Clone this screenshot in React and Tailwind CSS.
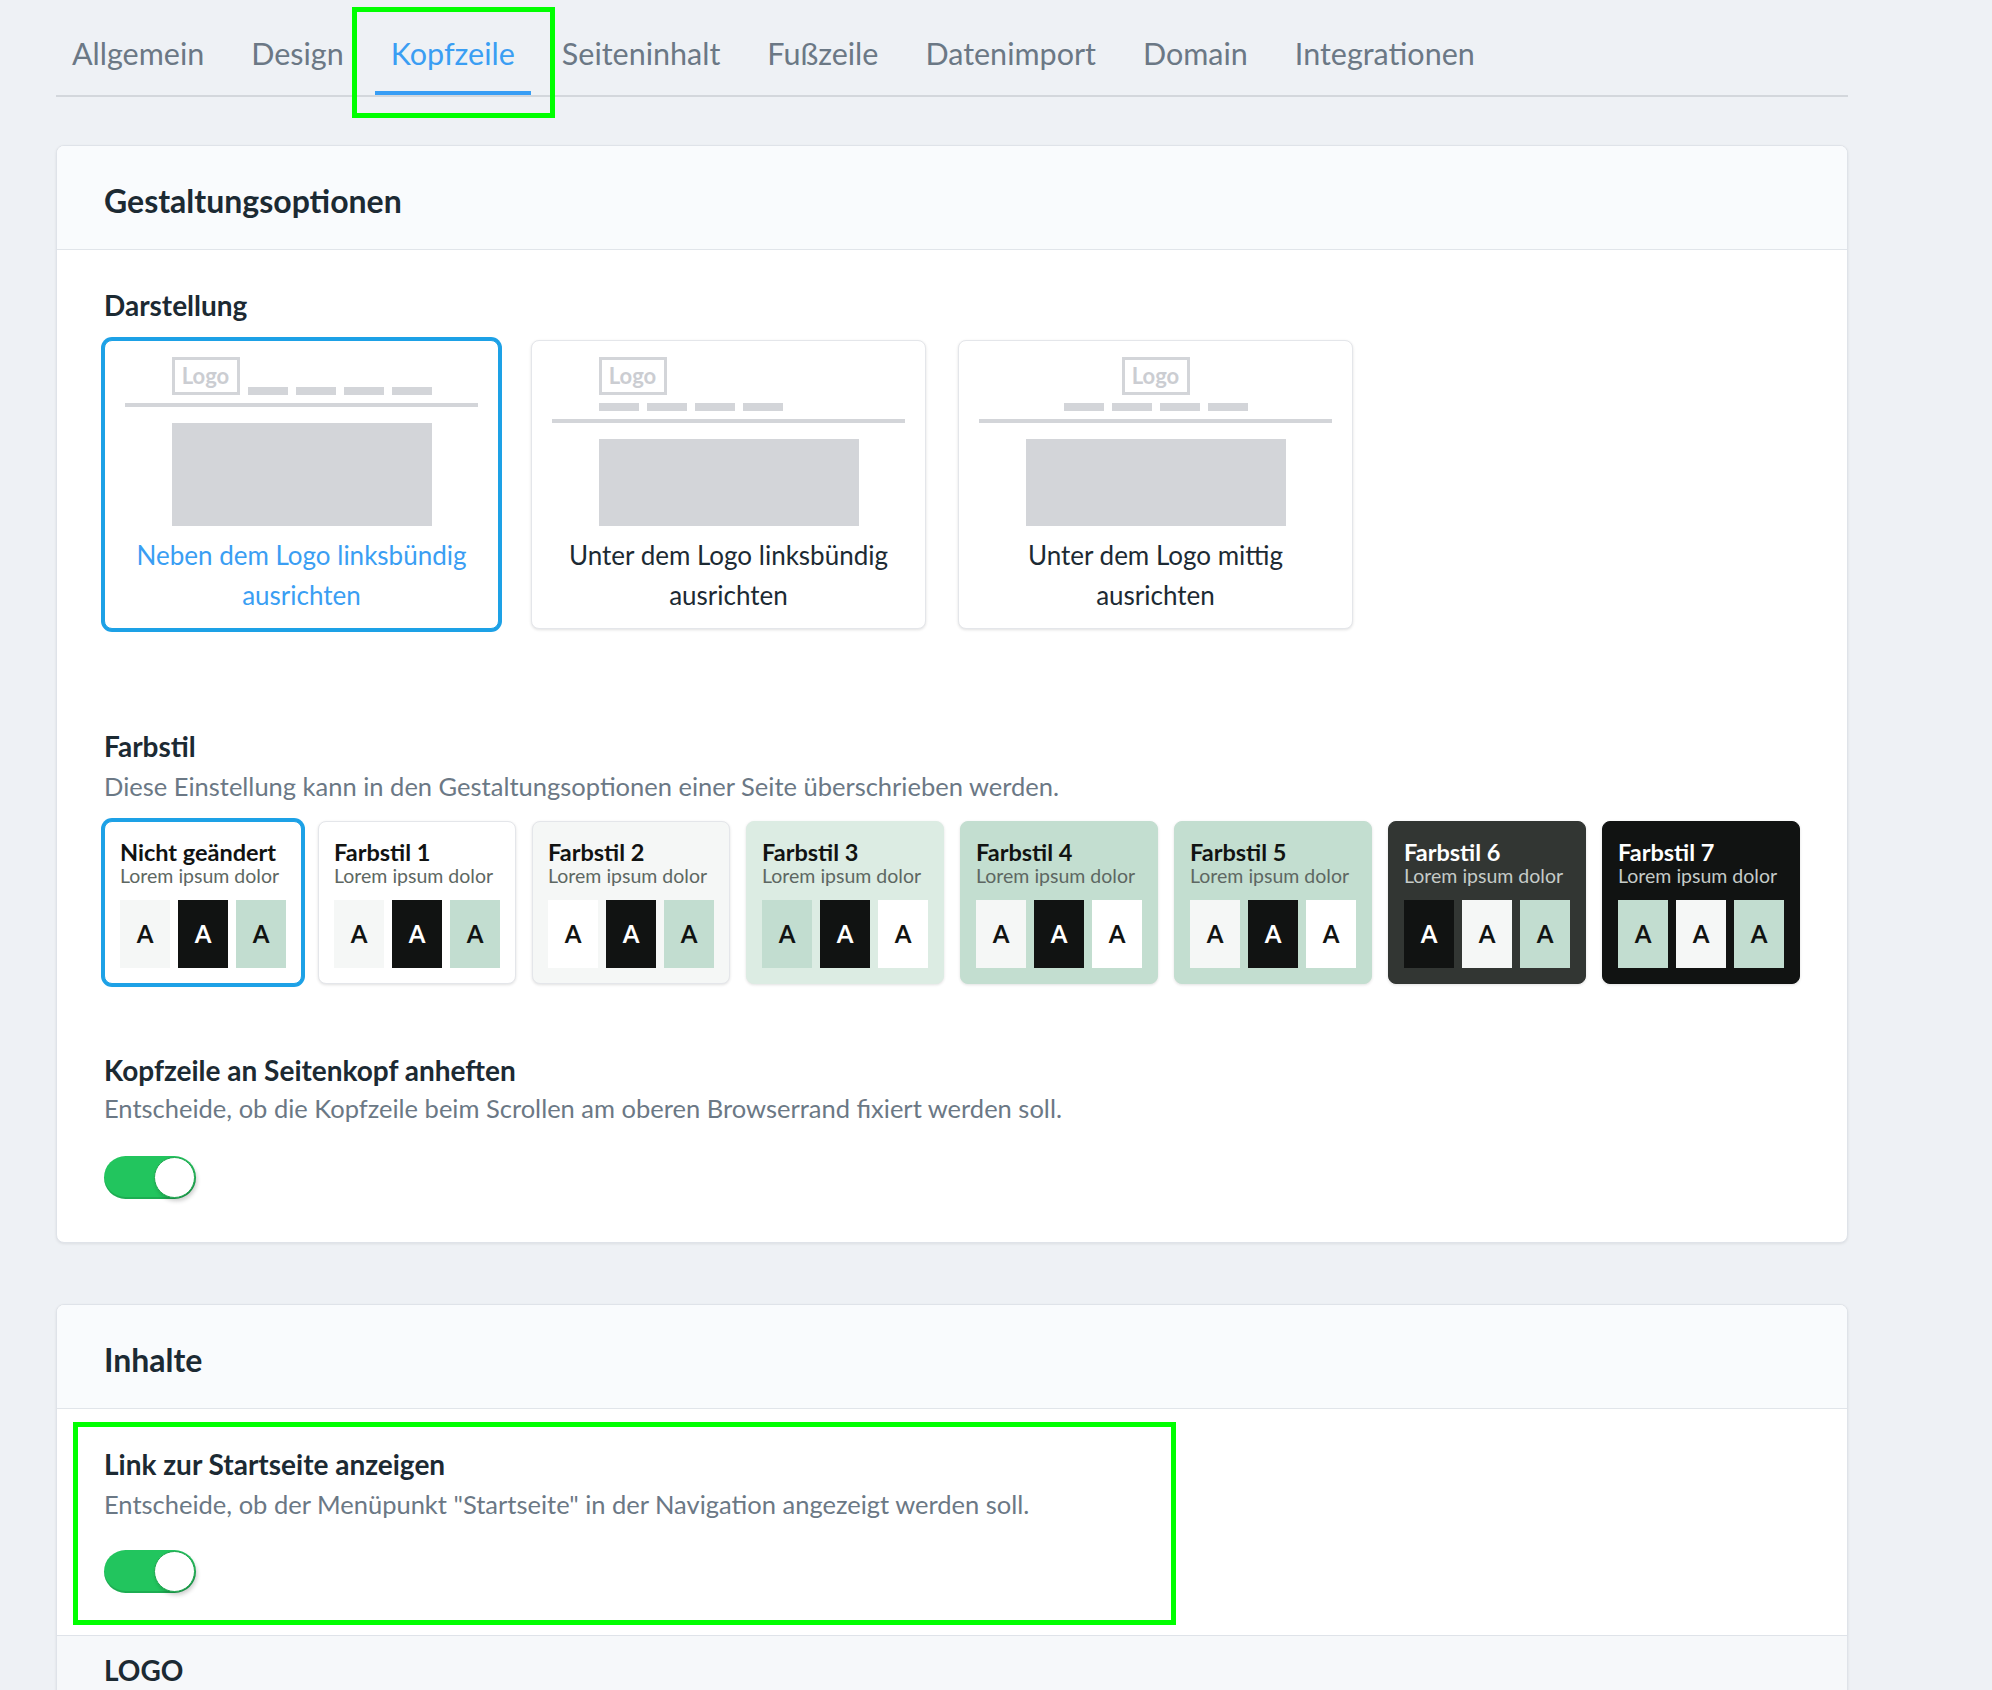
import React from 'react';

const tabs = ['Allgemein', 'Design', 'Kopfzeile', 'Seiteninhalt', 'Fußzeile', 'Datenimport', 'Domain', 'Integrationen'];

const SW = {
  light: 'bg-[#f5f7f6] text-[#111312]',
  white: 'bg-white text-[#111312]',
  dark: 'bg-[#111312] text-white',
  mint: 'bg-[#c2ddd0] text-[#111312]',
};

const styles = [
  { title: 'Nicht geändert', card: 'bg-white border-[#1da1e6] ring-[3px] ring-[#1da1e6]', dark: false, swatches: ['light', 'dark', 'mint'] },
  { title: 'Farbstil 1', card: 'bg-white border-[#e4e6ea]', dark: false, swatches: ['light', 'dark', 'mint'] },
  { title: 'Farbstil 2', card: 'bg-[#f5f7f6] border-[#e4e6ea]', dark: false, swatches: ['white', 'dark', 'mint'] },
  { title: 'Farbstil 3', card: 'bg-[#dcece3] border-[#dcece3]', dark: false, swatches: ['mint', 'dark', 'white'] },
  { title: 'Farbstil 4', card: 'bg-[#c3ded0] border-[#c3ded0]', dark: false, swatches: ['light', 'dark', 'white'] },
  { title: 'Farbstil 5', card: 'bg-[#c3ded0] border-[#c3ded0]', dark: false, swatches: ['light', 'dark', 'white'] },
  { title: 'Farbstil 6', card: 'bg-[#323633] border-[#323633]', dark: true, swatches: ['dark', 'light', 'mint'] },
  { title: 'Farbstil 7', card: 'bg-[#111312] border-[#111312]', dark: true, swatches: ['mint', 'light', 'mint'] },
];

const LogoBox = () => (
  <div className="flex h-[38px] w-[68px] items-center justify-center border-[3px] border-[#d3d5d9] text-[22px] font-bold leading-none text-[#cbcdd2]">
    Logo
  </div>
);

const Bars = () => (
  <div className="flex gap-2">
    <div className="h-2 w-10 bg-[#d3d5d9]" />
    <div className="h-2 w-10 bg-[#d3d5d9]" />
    <div className="h-2 w-10 bg-[#d3d5d9]" />
    <div className="h-2 w-10 bg-[#d3d5d9]" />
  </div>
);

const LayoutCard = ({ variant, selected, children }) => (
  <div
    className={
      selected
        ? 'flex h-[289px] w-[395px] flex-col rounded-lg border border-[#1da1e6] bg-white pt-4 ring-[3px] ring-[#1da1e6]'
        : 'flex h-[289px] w-[395px] flex-col rounded-lg border border-[#e4e6ea] bg-white pt-4 shadow-[0_1px_3px_rgba(0,0,0,0.12)]'
    }
  >
    {variant === 'side' && (
      <div className="flex w-[260px] items-end gap-2 self-center">
        <LogoBox />
        <Bars />
      </div>
    )}
    {variant === 'below' && (
      <div className="flex w-[260px] flex-col items-start gap-2 self-center">
        <LogoBox />
        <Bars />
      </div>
    )}
    {variant === 'center' && (
      <div className="flex w-[260px] flex-col items-center gap-2 self-center">
        <LogoBox />
        <Bars />
      </div>
    )}
    <div className="mx-5 mt-2 h-1 bg-[#d3d5d9]" />
    <div className="mt-4 w-[260px] flex-1 self-center bg-[#d3d5d9]" />
    <p
      className={
        selected
          ? 'mb-[13px] mt-[9px] text-center text-[26px] leading-10 text-[#3a9ef3]'
          : 'mb-[13px] mt-[9px] text-center text-[26px] leading-10 text-[#1c2a33]'
      }
    >
      {children}
    </p>
  </div>
);

const Toggle = () => (
  <div className="flex h-[43px] w-[92px] items-center justify-end rounded-full bg-[#22c55e] pr-[1px] shadow-[inset_0_-2px_0_rgba(0,0,0,0.12)]">
    <div className="h-[41px] w-[41px] rounded-full border border-[#1fa64f] bg-white shadow-[2px_3px_4px_rgba(0,0,0,0.2)]" />
  </div>
);

const CardHeader = ({ title }) => (
  <div className="border-b border-[#e1e5ea] bg-[#f9fbfd] px-[47px] pb-[28px] pt-[35px]">
    <h2 className="text-[32px] font-bold leading-10 text-[#1c2a33]">{title}</h2>
  </div>
);

export default function App() {
  return (
    <div className="relative min-h-screen bg-[#eef1f5] pb-10 font-['Lato',sans-serif]">
      <div className="ml-[56px] w-[1792px]">
        {/* Tabs */}
        <nav className="flex gap-[15px] border-b-2 border-[#d3d7dc]">
          {tabs.map((t) =>
            t === 'Kopfzeile' ? (
              <div key={t} className="border-b-4 border-[#389ef5] px-4 pb-5 pt-[35px] text-[30.5px] leading-9 text-[#3a9ef3]">
                {t}
              </div>
            ) : (
              <div key={t} className="border-b-4 border-transparent px-4 pb-5 pt-[35px] text-[30.5px] leading-9 text-[#6b7885]">
                {t}
              </div>
            )
          )}
        </nav>

        {/* Gestaltungsoptionen */}
        <section className="mt-12 overflow-hidden rounded-lg border border-[#dfe3e9] bg-white shadow-[0_1px_3px_rgba(0,0,0,0.08)]">
          <CardHeader title="Gestaltungsoptionen" />
          <div className="px-[47px] pb-[43px] pt-[37px]">
            <h3 className="text-[28px] font-bold leading-9 text-[#1c2a33]">Darstellung</h3>
            <div className="mt-[17px] flex gap-8">
              <LayoutCard variant="side" selected>
                Neben dem Logo linksbündig
                <br />
                ausrichten
              </LayoutCard>
              <LayoutCard variant="below">
                Unter dem Logo linksbündig
                <br />
                ausrichten
              </LayoutCard>
              <LayoutCard variant="center">
                Unter dem Logo mittig
                <br />
                ausrichten
              </LayoutCard>
            </div>

            <h3 className="mt-[99px] text-[28px] font-bold leading-9 text-[#1c2a33]">Farbstil</h3>
            <p className="mt-[5px] text-[25.5px] leading-[34px] text-[#6b7885]">
              Diese Einstellung kann in den Gestaltungsoptionen einer Seite überschrieben werden.
            </p>
            <div className="mt-[18px] flex gap-4">
              {styles.map((s) => (
                <div
                  key={s.title}
                  className={'h-[163px] w-[198px] rounded-lg border px-[15px] pb-[15px] pt-[17px] shadow-[0_1px_3px_rgba(0,0,0,0.12)] ' + s.card}
                >
                  <div className={s.dark ? 'text-[23.5px] font-bold leading-[26px] text-white' : 'text-[23.5px] font-bold leading-[26px] text-[#111312]'}>
                    {s.title}
                  </div>
                  <div className={s.dark ? 'text-[19.5px] leading-[22px] text-[#c5cbc8]' : 'text-[19.5px] leading-[22px] text-[#5d6762]'}>
                    Lorem ipsum dolor
                  </div>
                  <div className="mt-[13px] flex gap-2">
                    {s.swatches.map((k, i) => (
                      <div key={i} className={'flex h-[68px] w-[50px] items-center justify-center text-[24px] font-bold ' + SW[k]}>
                        A
                      </div>
                    ))}
                  </div>
                </div>
              ))}
            </div>

            <h3 className="mt-[68px] text-[28px] font-bold leading-9 text-[#1c2a33]">Kopfzeile an Seitenkopf anheften</h3>
            <p className="mt-1 text-[25.5px] leading-8 text-[#6b7885]">
              Entscheide, ob die Kopfzeile beim Scrollen am oberen Browserrand fixiert werden soll.
            </p>
            <div className="mt-[32px]">
              <Toggle />
            </div>
          </div>
        </section>

        {/* Inhalte */}
        <section className="mt-[61px] overflow-hidden rounded-t-lg border border-[#dfe3e9] bg-white shadow-[0_1px_3px_rgba(0,0,0,0.08)]">
          <CardHeader title="Inhalte" />
          <div className="px-[47px] pb-[42px] pt-[37px]">
            <h3 className="text-[28px] font-bold leading-9 text-[#1c2a33]">Link zur Startseite anzeigen</h3>
            <p className="mt-[6px] text-[25.5px] leading-8 text-[#6b7885]">
              Entscheide, ob der Menüpunkt "Startseite" in der Navigation angezeigt werden soll.
            </p>
            <div className="mt-[30px]">
              <Toggle />
            </div>
          </div>
          <div className="border-t border-[#dfe3e9] bg-[#f6f8fa] px-[47px] pb-16 pt-[16px]">
            <h3 className="text-[28px] font-bold leading-9 text-[#1c2a33]">LOGO</h3>
          </div>
        </section>
      </div>

      {/* annotation frames */}
      <div className="absolute left-[352px] top-[7px] h-[111px] w-[203px] border-[5px] border-[#00ff00]" />
      <div className="absolute left-[73px] top-[1422px] h-[203px] w-[1103px] border-[5px] border-[#00ff00]" />
    </div>
  );
}
